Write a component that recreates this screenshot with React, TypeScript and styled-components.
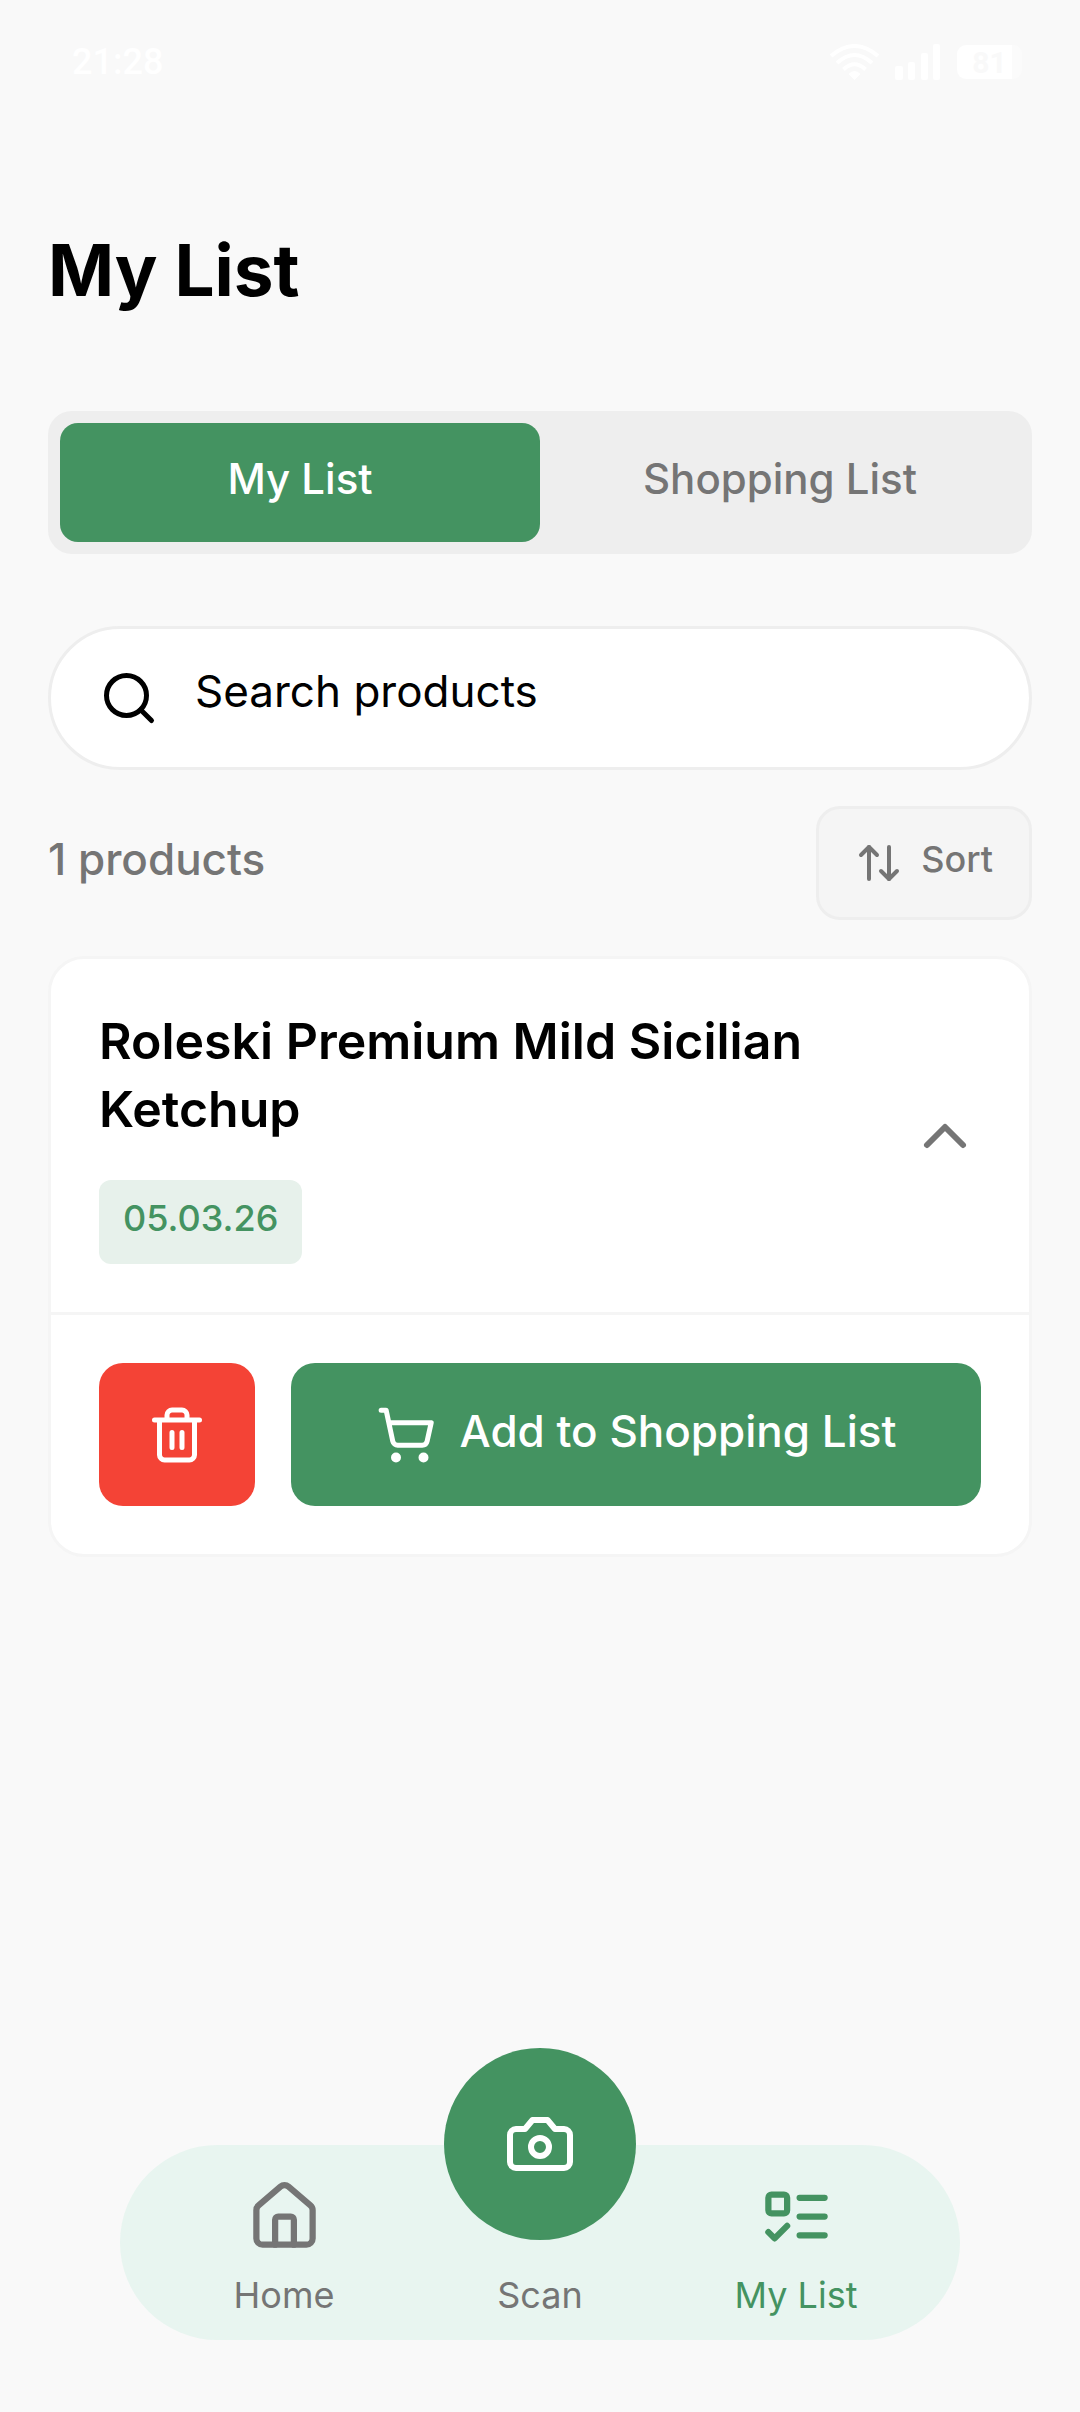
import React, { useState } from "react";
import styled, { createGlobalStyle } from "styled-components";
import {
  ArrowUpDown,
  ChevronUp,
  House,
  Search,
  ShoppingCart,
} from "lucide-react";

const color = {
  page: "#f9f9f9",
  surface: "#ffffff",
  line: "#eeeeee",
  soft: "#f5f5f5",
  green: "#449361",
  badge: "#e7f1eb",
  nav: "#e8f5f0",
  red: "#f44336",
  muted: "#757575",
  text: "#000000",
};

const GlobalStyle = createGlobalStyle`
  * { box-sizing: border-box; }
  body {
    margin: 0;
    background: ${color.page};
    color: ${color.text};
    font-family: Inter, "Noto Sans", sans-serif;
  }
  button, input { font: inherit; }
  button { border: 0; cursor: pointer; }
  svg { display: block; flex: none; }
`;

const Screen = styled.div`
  display: flex;
  flex-direction: column;
  min-height: 100vh;
  padding-bottom: 72px;
`;

const StatusBar = styled.header`
  display: flex;
  align-items: center;
  justify-content: space-between;
  height: 124px;
  padding: 0 58px 0 72px;
  color: #ffffff;
  font: 500 36px Roboto, sans-serif;
`;

const StatusIcons = styled.div`
  display: flex;
  align-items: center;
  gap: 16px;
`;

const Battery = styled.span`
  display: flex;
  align-items: center;
  justify-content: center;
  width: 65px;
  height: 34px;
  border-radius: 9px;
  background: linear-gradient(90deg, #ffffff 84%, #fbfbfb 84%);
  color: ${color.page};
  font-size: 30px;
  font-weight: 700;
`;

const Main = styled.main`
  display: flex;
  flex: 1;
  flex-direction: column;
  padding: 92px 48px 48px;
`;

const Title = styled.h1`
  margin: 0 0 87px;
  font-size: 71px;
  font-weight: 700;
  line-height: 108px;
`;

const Tabs = styled.div`
  display: grid;
  grid-template-columns: 1fr 1fr;
  height: 143px;
  padding: 12px;
  border-radius: 24px;
  background: ${color.line};
`;

const Tab = styled.button<{ $active: boolean }>`
  border-radius: 18px;
  background: ${(p) => (p.$active ? color.green : "transparent")};
  color: ${(p) => (p.$active ? "#ffffff" : color.muted)};
  font-size: 42px;
  font-weight: 500;
`;

const Label = styled.span`
  display: block;
  padding-bottom: 8px;
`;

const SearchBox = styled.label`
  display: flex;
  align-items: center;
  gap: 36px;
  height: 144px;
  margin-top: 72px;
  padding: 0 48px;
  border: 3px solid ${color.line};
  border-radius: 72px;
  background: ${color.surface};
`;

const SearchInput = styled.input`
  flex: 1;
  min-width: 0;
  padding: 0 0 14px;
  border: 0;
  outline: 0;
  background: none;
  color: ${color.text};
  font-size: 44px;

  &::placeholder {
    color: ${color.text};
    opacity: 1;
  }
`;

const ListHeader = styled.div`
  display: flex;
  align-items: center;
  justify-content: space-between;
  margin: 36px 0;
  color: ${color.muted};
  font-weight: 500;
`;

const Count = styled.div`
  font-size: 44px;
`;

const SortButton = styled.button`
  display: flex;
  align-items: center;
  gap: 18px;
  height: 114px;
  padding: 0 36px;
  border: 3px solid ${color.line};
  border-radius: 24px;
  background: ${color.soft};
  color: ${color.muted};
  font-size: 36px;
`;

const Card = styled.article`
  border: 3px solid ${color.soft};
  border-radius: 36px;
  background: ${color.surface};
`;

const CardHead = styled.div`
  display: flex;
  align-items: center;
  gap: 24px;
  padding: 48px;
  border-bottom: 3px solid ${color.soft};
`;

const CardInfo = styled.div`
  flex: 1;
`;

const ProductName = styled.h2`
  margin: 0 0 37px;
  font-size: 50px;
  font-weight: 600;
  line-height: 68px;
`;

const DateBadge = styled.time`
  display: inline-flex;
  align-items: center;
  height: 84px;
  padding: 0 24px;
  border-radius: 12px;
  background: ${color.badge};
  color: ${color.green};
  font-size: 36px;
  font-weight: 500;
  vertical-align: top;
`;

const ToggleButton = styled.button`
  padding: 0;
  background: none;
  color: ${color.muted};
`;

const CardActions = styled.div`
  display: flex;
  gap: 36px;
  padding: 48px;
`;

const ActionButton = styled.button<{ $tone: "danger" | "primary" }>`
  display: flex;
  flex: ${(p) => (p.$tone === "primary" ? "1" : "none")};
  align-items: center;
  justify-content: center;
  gap: 24px;
  height: 143px;
  padding: 0 48px;
  border-radius: 24px;
  background: ${(p) => (p.$tone === "primary" ? color.green : color.red)};
  color: #ffffff;
  font-size: 44px;
  font-weight: 500;
`;

const BottomNav = styled.nav`
  display: grid;
  grid-template-columns: repeat(3, 1fr);
  height: 195px;
  margin: 0 120px;
  padding: 34px 36px 18px;
  border-radius: 98px;
  background: ${color.nav};
`;

const NavLink = styled.a<{ $active?: boolean }>`
  position: relative;
  display: flex;
  flex-direction: column;
  align-items: center;
  justify-content: flex-end;
  gap: 14px;
  color: ${(p) => (p.$active ? color.green : color.muted)};
  font-size: 36px;
  line-height: 54px;
  text-decoration: none;
`;

const ScanCircle = styled.span`
  position: absolute;
  bottom: 82px;
  display: flex;
  align-items: center;
  justify-content: center;
  width: 192px;
  height: 192px;
  border-radius: 50%;
  background: ${color.green};
  color: #ffffff;
`;

const strokeProps = {
  viewBox: "0 0 24 24",
  fill: "none",
  stroke: "currentColor",
  strokeWidth: 2,
  strokeLinecap: "round" as const,
  strokeLinejoin: "round" as const,
  "aria-hidden": true,
};

const TrashIcon = () => (
  <svg width="60" height="60" {...strokeProps}>
    <path d="M3 6h18M19 6v14c0 1-1 2-2 2H7c-1 0-2-1-2-2V6M8 6V4c0-1 1-2 2-2h4c1 0 2 1 2 2v2M10 11v6M14 11v6" />
  </svg>
);

const CameraIcon = () => (
  <svg width="72" height="72" {...strokeProps}>
    <path d="M14.5 4h-5L7 7H4a2 2 0 0 0-2 2v9a2 2 0 0 0 2 2h16a2 2 0 0 0 2-2V9a2 2 0 0 0-2-2h-3l-2.5-3z" />
    <circle cx="12" cy="13" r="3" />
  </svg>
);

const ChecklistIcon = () => (
  <svg width="75" height="75" {...strokeProps}>
    <rect x="3" y="5" width="6" height="6" rx="1" />
    <path d="m3 17 2 2 4-4M13 6h8M13 12h8M13 18h8" />
  </svg>
);

const WifiIcon = () => (
  <svg width="49" height="36" viewBox="0 0 49 36" fill="none" stroke="#ffffff" strokeWidth="4" aria-hidden>
    <path d="M1 12Q24.500-8 48 12M7 19Q24.500 3 42 19M13.500 25.500Q24.500 15 35.500 25.500" />
    <path d="M18.500 30Q24.500 24 30.500 30L24.500 36Z" fill="#ffffff" stroke="none" />
  </svg>
);

const SignalIcon = () => (
  <svg width="46" height="36" viewBox="0 0 46 36" fill="#ffffff" aria-hidden>
    <rect x="0" y="22" width="8" height="14" rx="2" />
    <rect x="13" y="18" width="7" height="18" rx="2" />
    <rect x="26" y="9" width="7" height="27" rx="2" />
    <rect x="38" y="0" width="7" height="36" rx="2" />
  </svg>
);

const tabs = ["My List", "Shopping List"];

export default function App() {
  const [active, setActive] = useState(tabs[0]);

  return (
    <>
      <GlobalStyle />
      <Screen>
        <StatusBar>
          <span>21:28</span>
          <StatusIcons>
            <WifiIcon />
            <SignalIcon />
            <Battery>81</Battery>
          </StatusIcons>
        </StatusBar>

        <Main>
          <Title>My List</Title>

          <Tabs role="tablist">
            {tabs.map((name) => (
              <Tab
                key={name}
                role="tab"
                aria-selected={active === name}
                $active={active === name}
                onClick={() => setActive(name)}
              >
                <Label>{name}</Label>
              </Tab>
            ))}
          </Tabs>

          <SearchBox>
            <Search size={60} />
            <SearchInput type="text" placeholder="Search products" aria-label="Search products" />
          </SearchBox>

          <ListHeader>
            <Count>
              <Label>1 products</Label>
            </Count>
            <SortButton>
              <ArrowUpDown size={48} />
              <Label>Sort</Label>
            </SortButton>
          </ListHeader>

          <Card>
            <CardHead>
              <CardInfo>
                <ProductName>Roleski Premium Mild Sicilian Ketchup</ProductName>
                <DateBadge dateTime="2026-03-05">
                  <Label>05.03.26</Label>
                </DateBadge>
              </CardInfo>
              <ToggleButton aria-label="Collapse" aria-expanded="true">
                <ChevronUp size={72} />
              </ToggleButton>
            </CardHead>
            <CardActions>
              <ActionButton $tone="danger" aria-label="Delete">
                <TrashIcon />
              </ActionButton>
              <ActionButton $tone="primary">
                <ShoppingCart size={60} />
                <Label>Add to Shopping List</Label>
              </ActionButton>
            </CardActions>
          </Card>
        </Main>

        <BottomNav>
          <NavLink href="#home">
            <House size={75} />
            Home
          </NavLink>
          <NavLink href="#scan">
            <ScanCircle>
              <CameraIcon />
            </ScanCircle>
            Scan
          </NavLink>
          <NavLink href="#my-list" $active aria-current="page">
            <ChecklistIcon />
            My List
          </NavLink>
        </BottomNav>
      </Screen>
    </>
  );
}
